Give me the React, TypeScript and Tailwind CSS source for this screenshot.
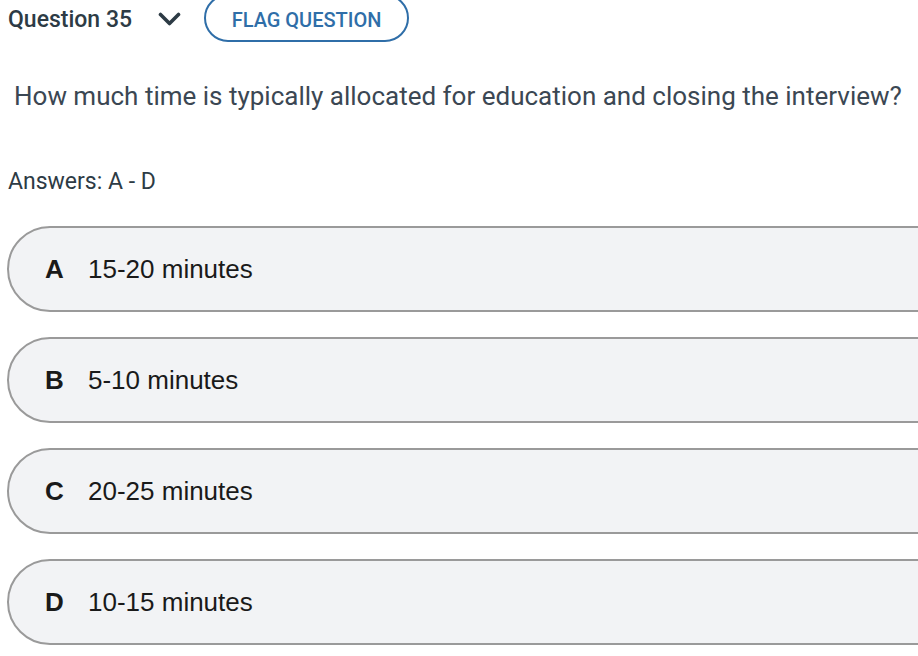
import React from 'react';

const answers = [
  { letter: 'A', text: '15-20 minutes' },
  { letter: 'B', text: '5-10 minutes' },
  { letter: 'C', text: '20-25 minutes' },
  { letter: 'D', text: '10-15 minutes' },
];

export default function App() {
  return (
    <div className="w-[918px] h-[656px] overflow-hidden bg-white font-['Roboto',sans-serif]">
      {/* Header */}
      <div className="flex items-center -mt-[6px] h-[48px]">
        <span className="pl-2 pt-[4px] text-[23px] font-medium text-[#2d3b45]">Question 35</span>
        <svg className="ml-[26px] mt-[2px] w-[23px] h-[14px]" viewBox="0 0 23 14" fill="none">
          <path d="M2.5 2.5 L11.5 11.5 L20.5 2.5" stroke="#2d3b45" strokeWidth="3.6" strokeLinecap="round" strokeLinejoin="round" />
        </svg>
        <button className="ml-[23px] h-[48px] w-[205px] rounded-full border-2 border-[#2f6ea8] text-[20px] font-medium text-[#2f6ea8] flex items-center justify-center pt-[4px]">
          FLAG QUESTION
        </button>
      </div>

      {/* Question */}
      <p className="mt-[38px] pl-[14px] text-[26px] leading-[32px] text-[#3b4753] whitespace-nowrap">
        How much time is typically allocated for education and closing the interview?
      </p>

      <p className="mt-[55px] pl-2 text-[23px] leading-[30px] text-[#2d3b45]">Answers: A - D</p>

      {/* Options */}
      <div className="mt-[29px] ml-[7px] w-[1000px] flex flex-col gap-[25px]">
        {answers.map((a) => (
          <div
            key={a.letter}
            className="h-[86px] rounded-[43px] border-2 border-[#9a9a9a] bg-[#f2f3f5] flex items-center pl-[36px] font-['Liberation_Sans',Arial,sans-serif] text-[26px] text-[#1a1a1a]"
          >
            <span className="w-[43px] font-bold">{a.letter}</span>
            <span>{a.text}</span>
          </div>
        ))}
      </div>
    </div>
  );
}
